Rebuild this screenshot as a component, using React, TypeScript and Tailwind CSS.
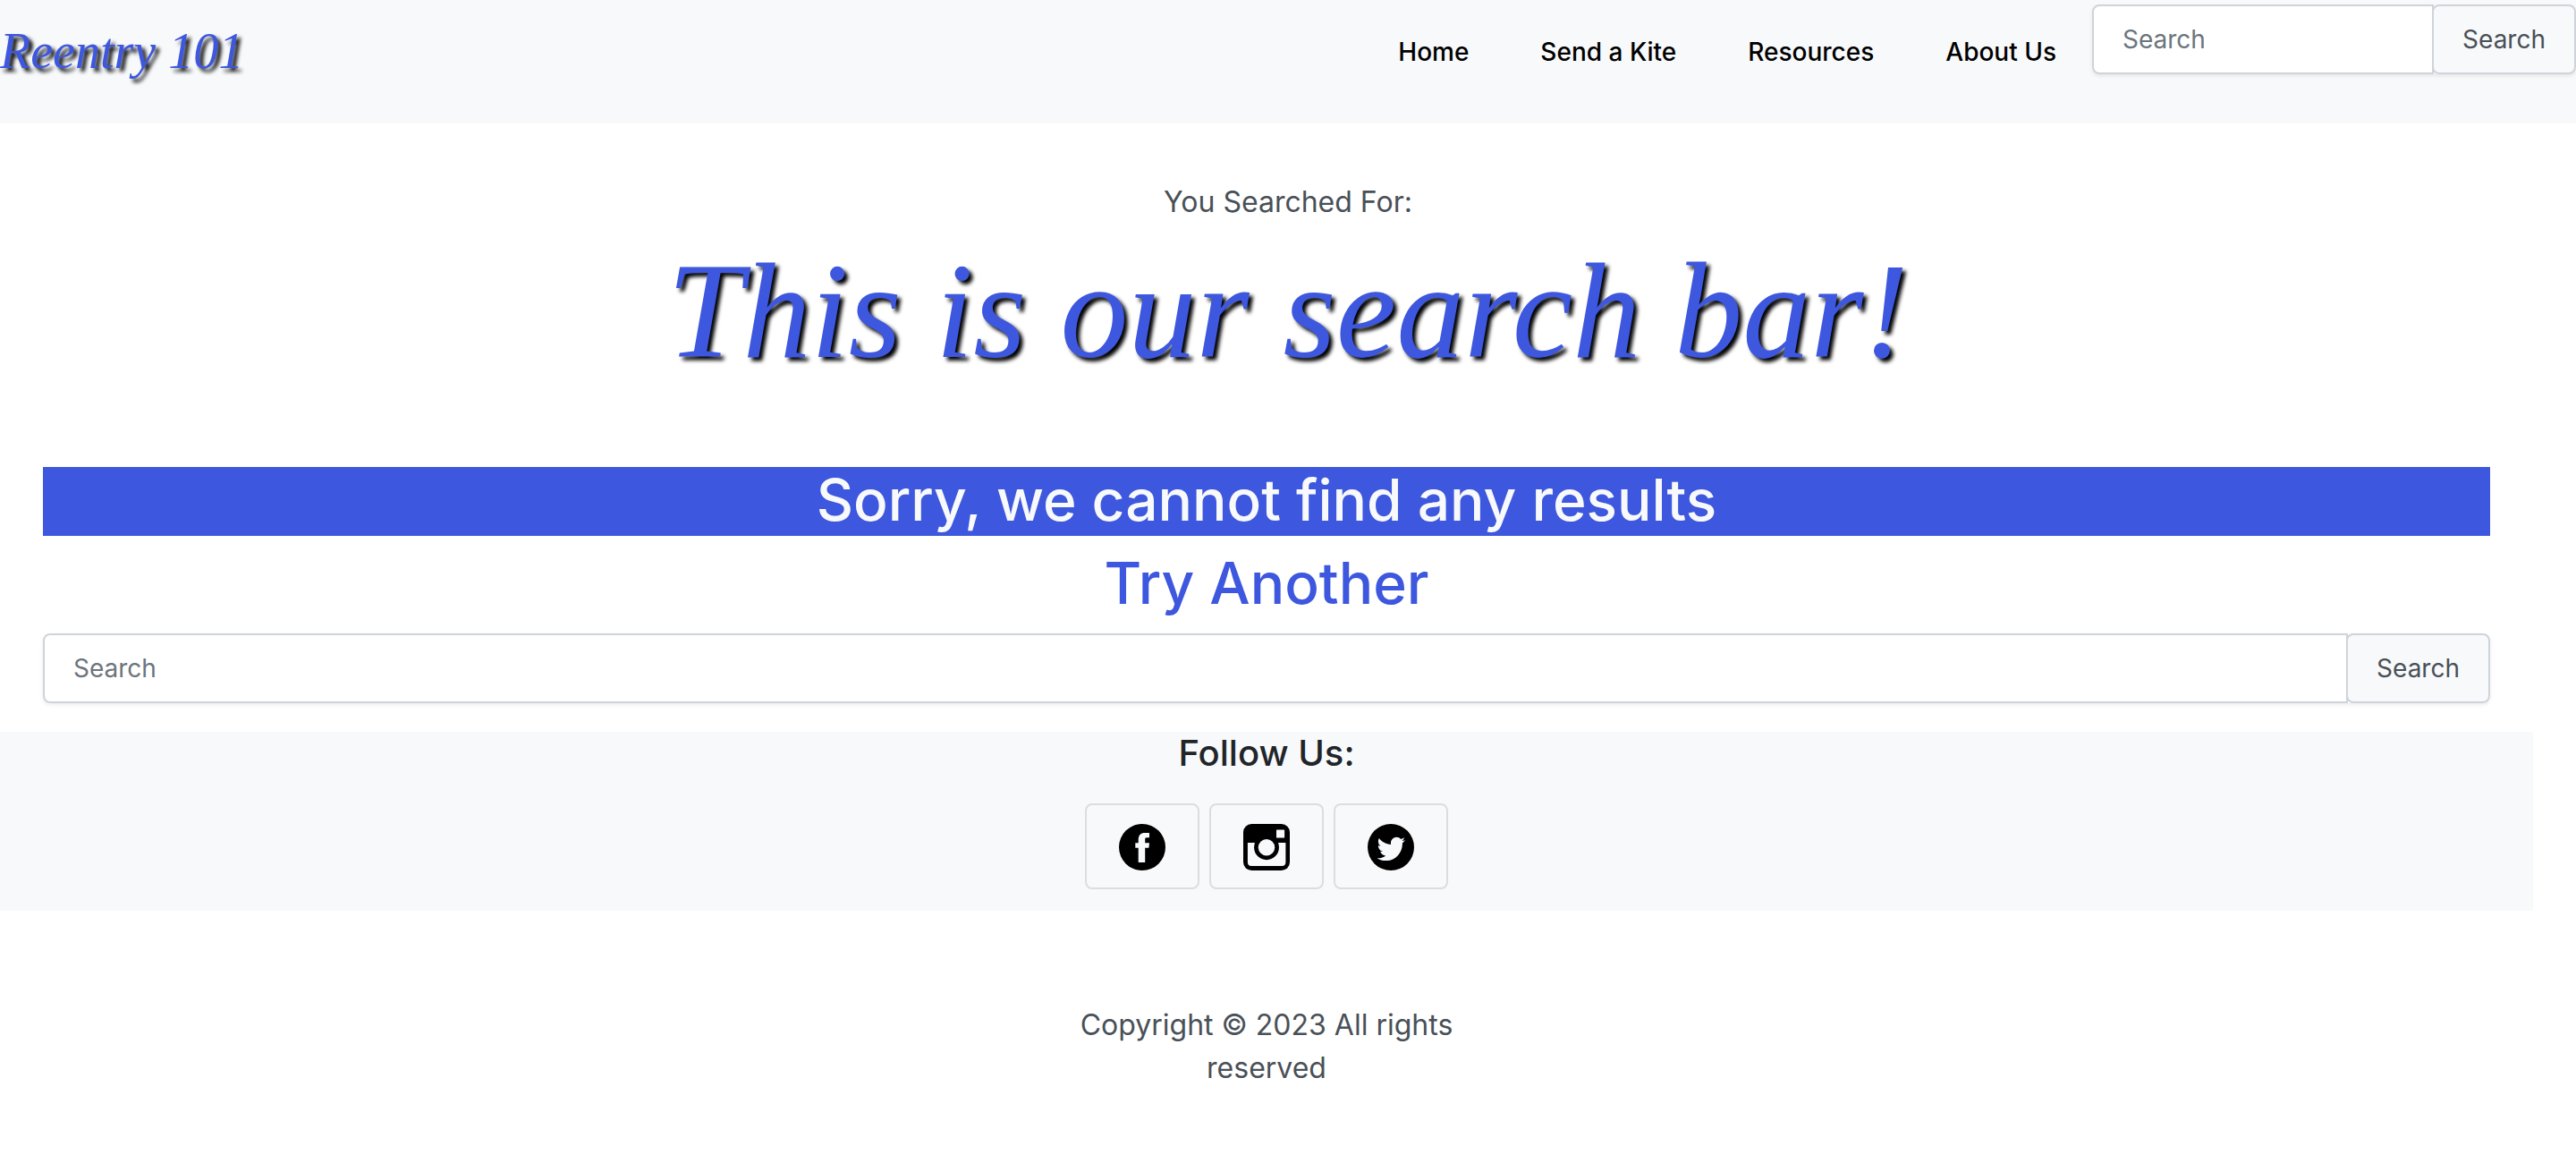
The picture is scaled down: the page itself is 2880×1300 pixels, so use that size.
import React from "react";

const NAV_LINKS = ["Home", "Send a Kite", "Resources", "About Us"];

const SCRIPT_FONT =
  "font-['Apple_Chancery','Z003','URW_Chancery_L','Liberation_Serif',serif] italic text-[#3d57de]";

function SearchForm({ label, className }: { label: string; className: string }) {
  return (
    <form
      role="search"
      className={`flex rounded-lg shadow-[0_2px_4px_rgba(0,0,0,0.08)] ${className}`}
      onSubmit={(event) => event.preventDefault()}
    >
      <input
        type="text"
        aria-label={label}
        placeholder="Search"
        className="min-w-0 flex-1 rounded-l-lg border-2 border-[#ced4da] bg-white px-8 py-4 text-[28px] leading-[42px] text-[#495057] outline-none placeholder:text-[#6c757d]"
      />
      <button
        type="submit"
        className="-ml-0.5 rounded-lg border-2 border-[#ced4da] bg-[#f8f9fb] px-8 py-4 text-[28px] leading-[42px] text-[#495057]"
      >
        Search
      </button>
    </form>
  );
}

function FacebookIcon() {
  return (
    <svg viewBox="0 0 52 52" className="size-[52px]" aria-hidden="true">
      <circle cx="26" cy="26" r="26" fill="#000" />
      <path
        d="M21.7 43V26.7H18.3V21.3H21.7V18C21.7 12.5 24.3 10 29 10H34V15.3H31C29.7 15.3 29.2 16 29.2 17.2V21.3H34L33.4 26.7H29.2V43Z"
        fill="#f8f9fb"
      />
    </svg>
  );
}

function InstagramIcon() {
  return (
    <svg viewBox="0 0 53 53" className="size-[52px]" aria-hidden="true">
      <rect width="53" height="53" rx="9.5" fill="#000" />
      <path d="M5 21.3H48.3V43.5Q48.3 47.8 44 47.8H9.3Q5 47.8 5 43.5Z" fill="#f8f9fb" />
      <rect x="37.7" y="6.6" width="9.3" height="9.2" rx="0.6" fill="#f8f9fb" />
      <circle cx="26.5" cy="26.7" r="14.2" fill="#000" />
      <circle cx="26.5" cy="26.7" r="9.4" fill="#f8f9fb" />
    </svg>
  );
}

function TwitterIcon() {
  return (
    <svg viewBox="0 0 52 52" className="size-[52px]" aria-hidden="true">
      <circle cx="26" cy="26" r="26" fill="#000" />
      <path
        transform="translate(10.6 11.8) scale(0.0615 0.0632)"
        d="M459.37 151.716c.325 4.548.325 9.097.325 13.645 0 138.72-105.583 298.558-298.558 298.558-59.452 0-114.68-17.219-161.137-47.106 8.447.974 16.568 1.299 25.34 1.299 49.055 0 94.213-16.568 130.274-44.832-46.132-.975-84.792-31.188-98.112-72.772 6.498.974 12.995 1.624 19.818 1.624 9.421 0 18.843-1.3 27.614-3.573-48.081-9.747-84.143-51.98-84.143-102.985v-1.299c13.969 7.797 30.214 12.67 47.431 13.319-28.264-18.843-46.781-51.005-46.781-87.391 0-19.492 5.197-37.36 14.294-52.954 51.655 63.675 129.3 105.258 216.365 109.807-1.624-7.797-2.599-15.918-2.599-24.04 0-57.828 46.782-104.934 104.934-104.934 30.213 0 57.502 12.67 76.67 33.137 23.715-4.548 46.456-13.32 66.599-25.34-7.798 24.366-24.366 44.833-46.132 57.827 21.117-2.273 41.584-8.122 60.426-16.243-14.292 20.791-32.161 39.308-52.628 54.253z"
        fill="#f8f9fb"
      />
    </svg>
  );
}

const SOCIALS = [
  { name: "Facebook", Icon: FacebookIcon },
  { name: "Instagram", Icon: InstagramIcon },
  { name: "Twitter", Icon: TwitterIcon },
];

export default function App() {
  return (
    <div className="min-h-screen bg-white font-['Inter',sans-serif] text-[#495057]">
      <header className="flex items-start bg-[#f8f9fb] pt-[5px] pb-[13px]">
        <a
          href="#"
          className={`${SCRIPT_FONT} block h-[120px] pt-4 text-[56px] leading-[72px] whitespace-nowrap [text-shadow:4px_4px_4px_#000]`}
        >
          Reentry 101
        </a>
        <nav className="mt-8 ml-auto flex">
          {NAV_LINKS.map((label) => (
            <a
              key={label}
              href="#"
              className="px-10 text-[28px] leading-[42px] font-medium whitespace-nowrap text-black"
            >
              {label}
            </a>
          ))}
        </nav>
        <SearchForm label="Search the site" className="w-[541px]" />
      </header>

      <section className="pt-16 pb-[76px] text-center">
        <p className="text-[32px] leading-[48px]">You Searched For:</p>
        <h1
          className={`${SCRIPT_FONT} text-[152px] leading-[196px] whitespace-nowrap [text-shadow:4px_4px_4px_#000]`}
        >
          This is our search bar!
        </h1>
      </section>

      <div className="mr-12">
        <main className="px-12 text-center">
          <h2 className="mb-4 bg-[#3d57de] pb-[3px] text-[64px] leading-[74px] font-medium text-[#f8f9fb]">
            Sorry, we cannot find any results
          </h2>
          <h2 className="mb-4 pb-[3px] text-[64px] leading-[74px] font-medium text-[#3d57de]">
            Try Another
          </h2>
          <SearchForm label="Try another search" className="w-full" />
        </main>

        <section className="mt-8 bg-[#f8f9fb] pb-6 text-center">
          <h3 className="text-[40px] leading-[48px] font-medium text-[#212529]">Follow Us:</h3>
          <div className="mt-8 flex justify-center gap-[11px]">
            {SOCIALS.map(({ name, Icon }) => (
              <button
                key={name}
                type="button"
                aria-label={name}
                className="flex h-24 w-32 items-center justify-center rounded-lg border-2 border-[#dcdddf] pt-0.5"
              >
                <Icon />
              </button>
            ))}
          </div>
        </section>

        <footer className="px-12 pt-[104px] pb-16">
          <p className="mx-auto w-[440px] text-center text-[32px] leading-[48px]">
            Copyright © 2023 All rights reserved
          </p>
        </footer>
      </div>
    </div>
  );
}
